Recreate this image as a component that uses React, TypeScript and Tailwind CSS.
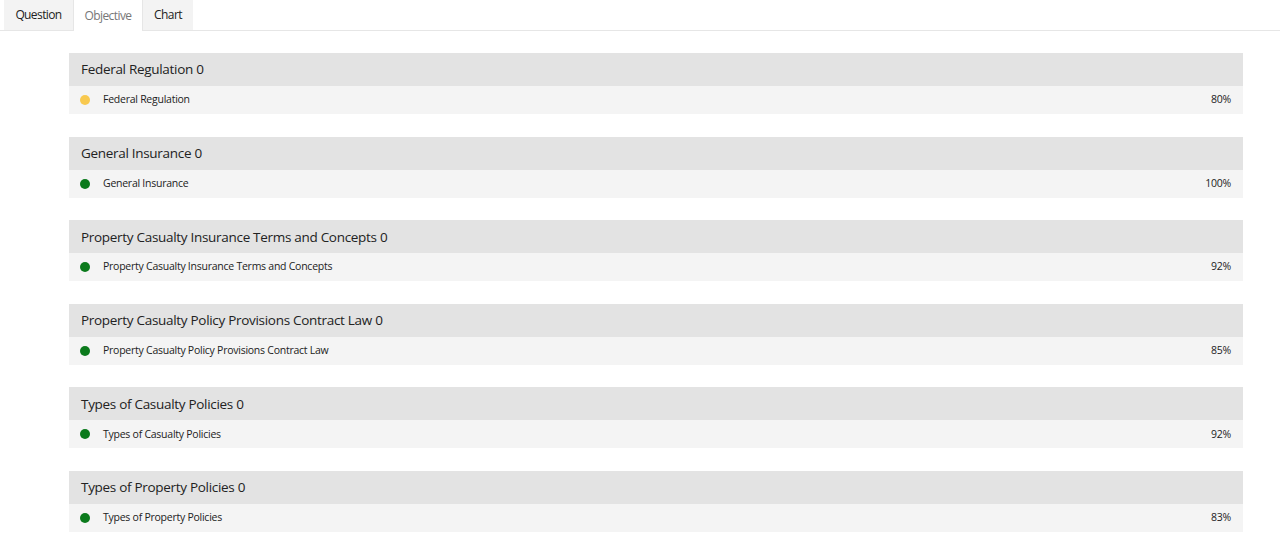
const groups = [
  { name: 'Federal Regulation', pct: '80%', color: 'bg-[#f8c94f]' },
  { name: 'General Insurance', pct: '100%', color: 'bg-[#0b7a1c]' },
  { name: 'Property Casualty Insurance Terms and Concepts', pct: '92%', color: 'bg-[#0b7a1c]' },
  { name: 'Property Casualty Policy Provisions Contract Law', pct: '85%', color: 'bg-[#0b7a1c]' },
  { name: 'Types of Casualty Policies', pct: '92%', color: 'bg-[#0b7a1c]' },
  { name: 'Types of Property Policies', pct: '83%', color: 'bg-[#0b7a1c]' },
];

export default function App() {
  return (
    <div className="min-h-[554px] bg-white text-[#222] font-['Open_Sans',sans-serif]">
      <div className="flex border-b border-[#e6e6e6] pl-1">
        <div className="flex h-[30px] w-[69px] items-center justify-center bg-[#f3f3f3] text-[12px] tracking-[-0.6px] text-[#222]">
          Question
        </div>
        <div className="flex h-[31px] -mb-px w-[70px] items-center justify-center border-x border-[#e6e6e6] bg-white text-[12px] tracking-[-0.6px] text-[#777]">
          Objective
        </div>
        <div className="flex h-[30px] w-[50px] items-center justify-center bg-[#f3f3f3] text-[12px] tracking-[-0.6px] text-[#222]">
          Chart
        </div>
      </div>
      <div className="flex flex-col gap-[22.6px] pl-[69px] pr-[37px] pt-[22px]">
        {groups.map((g) => (
          <div key={g.name}>
            <div className="flex h-[33px] items-center bg-[#e3e3e3] px-3 text-[13.5px] tracking-[-0.3px] text-[#222]">
              {g.name} 0
            </div>
            <div className="flex h-[28px] items-center bg-[#f4f4f4] pl-[11px] pr-3 text-[10.5px] tracking-[-0.25px] text-[#222]">
              <span className={`h-[10px] w-[10px] rounded-full ${g.color}`} />
              <span className="ml-[13px]">{g.name}</span>
              <span className="ml-auto">{g.pct}</span>
            </div>
          </div>
        ))}
      </div>
    </div>
  );
}
